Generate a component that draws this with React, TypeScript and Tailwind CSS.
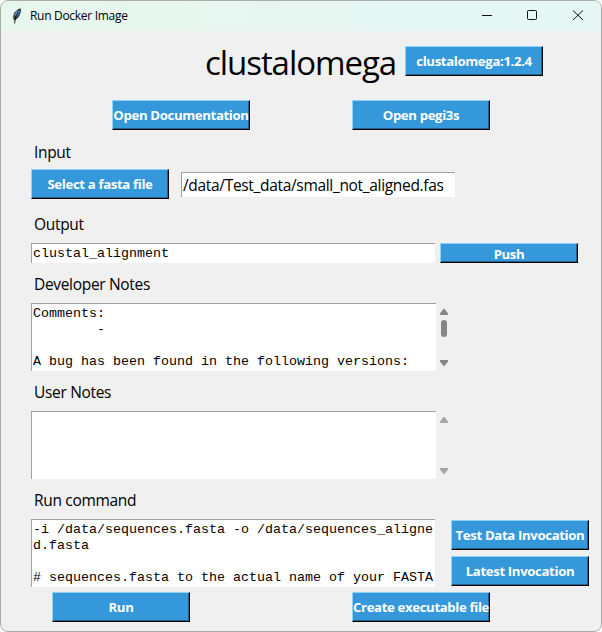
import type { ReactNode } from "react";

function Button({ children, size = "h-[30px] pb-px" }: { children: ReactNode; size?: string }) {
  return (
    <button
      type="button"
      className={`${size} w-[138px] shrink-0 border border-t-[#92d2fb] border-l-[#92d2fb] border-r-black border-b-black bg-[#3498db] px-0 shadow-[inset_-1px_-1px_0_#20618d] text-[13.2px] tracking-[-0.36px] leading-4 font-bold text-white whitespace-nowrap flex items-center justify-center`}
    >
      {children}
    </button>
  );
}

function Label({ children }: { children: ReactNode }) {
  return <div className="ml-[3px] h-6 text-[15.5px] leading-[22px] tracking-[-0.32px] whitespace-nowrap">{children}</div>;
}

function TextArea({ children, width }: { children?: ReactNode; width: string }) {
  return (
    <div
      className={`${width} h-[68px] shrink-0 overflow-hidden border-t border-l border-[#a0a0a0] bg-white pl-px pt-0.5 font-['Liberation_Mono',monospace] text-[13.33px] leading-4 whitespace-pre`}
    >
      {children}
    </div>
  );
}

function Scrollbar({ color, thumb }: { color: string; thumb?: boolean }) {
  return (
    <svg className={`h-[68px] w-2 shrink-0 ${color}`} viewBox="0 0 8 68" fill="currentColor">
      <path d="M3 6.5Q4 5.2 5 6.5L8 10.5V12H0V10.5Z" />
      {thumb && <rect x="1" y="17" width="6" height="17" rx="3" />}
      <path d="M0 57H8V58.5L5 62.3Q4 63.6 3 62.3L0 58.5Z" />
    </svg>
  );
}

function TitleBar() {
  return (
    <header className="flex h-[30px] items-center bg-gradient-to-r from-[#e8f7ee] to-[#e4f7f5]">
      <svg className="ml-[11px] h-4 w-2.5" viewBox="0 0 10 16">
        <path d="M8.8 .5C5 .9 1.9 4.5 1.2 8.5L1.8 12.4 4.9 10.8C7.7 8.5 9.3 4 8.8 .5Z" fill="#20252c" />
        <path d="M7.9 1.8C5.6 3.4 4.2 6 3.6 10.2 6.2 8.2 7.9 5 7.9 1.8Z" fill="#4c95e6" />
        <path d="M6.5 2.1C4 3.5 2.3 6 2.2 9.4Z" fill="#88aed6" />
        <path d="M6.5 4C4.5 7 3.1 10.5 2.6 15.5" fill="none" stroke="#111" strokeWidth=".9" />
      </svg>
      <span className="ml-2 text-[12px] leading-4 tracking-[-0.3px]">Run Docker Image</span>
      <svg className="ml-auto mr-[17px] h-3 w-[103px]" viewBox="0 0 103 12" fill="none" stroke="#111">
        <path d="M1 5.5H11" />
        <rect x="46.5" y="0.5" width="9" height="9" rx="1" />
        <path d="M92 .5L102 10M102 .5L92 10" />
      </svg>
    </header>
  );
}

export default function App() {
  return (
    <main className="h-[632px] w-[602px] overflow-hidden rounded-lg border border-[#ababab] bg-[#f0f0f0] font-['Open_Sans',sans-serif] text-black">
      <TitleBar />
      <div className="pl-[30px]">
        <div className="flex h-[69px] pl-[174px] pt-[15px]">
          <h1 className="-mt-[7px] w-[200px] shrink-0 text-[33px] leading-[48px] tracking-[-1.05px]">clustalomega</h1>
          <Button>clustalomega:1.2.4</Button>
        </div>
        <div className="flex gap-[102px] pl-[81px]">
          <Button>Open Documentation</Button>
          <Button>Open pegi3s</Button>
        </div>
        <div className="pt-[11px]">
          <Label>Input</Label>
        </div>
        <div className="mt-1 flex h-[30px] gap-3">
          <Button>Select a fasta file</Button>
          <div className="mt-[3px] h-[25px] w-[274px] overflow-hidden border-t border-l border-[#a0a0a0] bg-white pl-px text-[15.5px] leading-[25px] tracking-[-0.32px] whitespace-nowrap">
            /data/Test_data/small_not_aligned.fas
          </div>
        </div>
        <div className="pt-[14px]">
          <Label>Output</Label>
        </div>
        <div className="mt-[6px] flex h-5 gap-[5px]">
          <div className="h-5 w-[404px] overflow-hidden border-t border-l border-[#a0a0a0] bg-white pl-px pt-px font-['Liberation_Mono',monospace] text-[13.33px] leading-[18px]">
            clustal_alignment
          </div>
          <Button size="h-5 pt-[2px]">Push</Button>
        </div>
        <div className="pt-[10px]">
          <Label>Developer Notes</Label>
        </div>
        <div className="mt-[6px] flex gap-1">
          <TextArea width="w-[405px]">{"Comments:\n        -\n\nA bug has been found in the following versions:"}</TextArea>
          <Scrollbar color="text-[#858585]" thumb />
        </div>
        <div className="pt-[10px]">
          <Label>User Notes</Label>
        </div>
        <div className="mt-[6px] flex gap-1">
          <TextArea width="w-[405px]" />
          <Scrollbar color="text-[#a6a6a6]" />
        </div>
        <div className="pt-[10px]">
          <Label>Run command</Label>
        </div>
        <div className="mt-[6px] flex gap-4">
          <TextArea width="w-[404px]">
            {"-i /data/sequences.fasta -o /data/sequences_aligne\nd.fasta\n\n# sequences.fasta to the actual name of your FASTA"}
          </TextArea>
          <div className="flex flex-col gap-[6px] pt-px">
            <Button>Test Data Invocation</Button>
            <Button>Latest Invocation</Button>
          </div>
        </div>
        <div className="mt-[5px] flex gap-[162px] pl-[21px]">
          <Button>Run</Button>
          <Button>Create executable file</Button>
        </div>
      </div>
    </main>
  );
}
